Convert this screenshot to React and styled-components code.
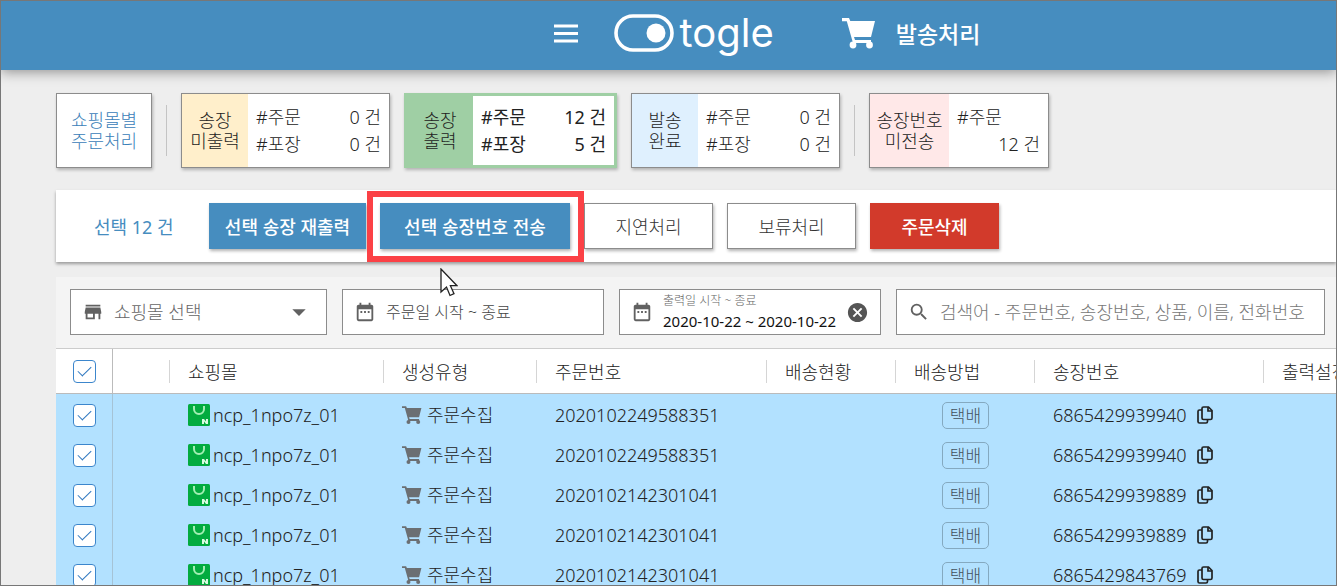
import React, { useState } from "react";
import styled, { createGlobalStyle } from "styled-components";
import {
  MdArrowDropDown,
  MdCancel,
  MdDateRange,
  MdSearch,
  MdStore,
} from "react-icons/md";

const columns = [
  { name: "", width: 57 },
  { name: "쇼핑몰", width: 214 },
  { name: "생성유형", width: 153 },
  { name: "주문번호", width: 230 },
  { name: "배송현황", width: 129 },
  { name: "배송방법", width: 139 },
  { name: "송장번호", width: 229 },
  { name: "출력설정", width: 150 },
];

const orders = [
  { id: 1, mall: "ncp_1npo7z_01", order: "2020102249588351", invoice: "6865429939940" },
  { id: 2, mall: "ncp_1npo7z_01", order: "2020102249588351", invoice: "6865429939940" },
  { id: 3, mall: "ncp_1npo7z_01", order: "2020102142301041", invoice: "6865429939889" },
  { id: 4, mall: "ncp_1npo7z_01", order: "2020102142301041", invoice: "6865429939889" },
  { id: 5, mall: "ncp_1npo7z_01", order: "2020102142301041", invoice: "6865429843769" },
];

function CartIcon({ size }) {
  return (
    <svg width={size} height={size} viewBox="0 0 34 34" fill="currentColor" aria-hidden="true">
      <path d="M0 2h7l1.3 3H33l-4 16H12l1 3h16v3H11L4.800 5.200H0z" />
      <circle cx="11" cy="29" r="3.400" />
      <circle cx="27.500" cy="29" r="3.400" />
    </svg>
  );
}

function MallIcon() {
  return (
    <svg width="22" height="22" viewBox="0 0 22 22" aria-hidden="true">
      <rect width="22" height="22" rx="1.500" fill="#03ab3f" />
      <path d="M6 2v3a5 5 0 0 0 10 0V2" fill="none" stroke="#a4efb4" strokeWidth="2" />
      <path d="M14 20v-5h2l2 2.500V15h2v5h-2l-2-2.500V20z" fill="#d9fbe0" />
    </svg>
  );
}

function CopyIcon() {
  return (
    <svg width="18" height="20" viewBox="0 0 18 20" fill="none" stroke="currentColor" strokeWidth="1.700" aria-hidden="true">
      <path d="M7.500 2h5L16 5.500V13a1.500 1.500 0 0 1-1.500 1.500h-7A1.500 1.500 0 0 1 6 13V3.500A1.500 1.500 0 0 1 7.500 2z" />
      <path d="M12 2v4h4" />
      <path d="M6 5H3.500A1.500 1.500 0 0 0 2 6.500v10A1.500 1.500 0 0 0 3.500 18H10a1.500 1.500 0 0 0 1.500-1.500v-2" />
    </svg>
  );
}

function StatusCard({ title, tone, strong, counts }) {
  return (
    <Card $tone={tone} $strong={strong}>
      <CardLabel $tone={tone}>
        {title[0]}
        <br />
        {title[1]}
      </CardLabel>
      <CardBody>
        {counts.map(([name, value]) => (
          <CountRow key={name}>
            <span>{name}</span>
            <Count>{value}</Count>
          </CountRow>
        ))}
      </CardBody>
    </Card>
  );
}

export default function App() {
  const [checked, setChecked] = useState(orders.map((o) => o.id));
  const all = checked.length === orders.length;
  const toggle = (id) =>
    setChecked(checked.includes(id) ? checked.filter((c) => c !== id) : [...checked, id]);

  return (
    <Page>
      <GlobalStyle />
      <Header>
        <MenuButton aria-label="메뉴">
          <svg width="32" height="32" viewBox="0 0 32 32" aria-hidden="true">
            <path d="M4 9h24M4 16.500h24M4 24h24" stroke="#fff" strokeWidth="3.200" />
          </svg>
        </MenuButton>
        <Logo href="#">
          <svg width="60" height="38" viewBox="0 0 60 38" aria-hidden="true">
            <rect x="2" y="2" width="56" height="34" rx="17" fill="none" stroke="#fff" strokeWidth="3.600" />
            <circle cx="42" cy="19" r="9.500" fill="#fff" />
          </svg>
          <LogoText>togle</LogoText>
        </Logo>
        <PageTitle>
          <CartIcon size={34} />
          발송처리
        </PageTitle>
      </Header>

      <Main>
        <Cards>
          <MallCard>
            쇼핑몰별
            <br />
            주문처리
          </MallCard>
          <Divider />
          <StatusCard
            title={["송장", "미출력"]}
            tone="#ffefcb"
            counts={[["#주문", "0 건"], ["#포장", "0 건"]]}
          />
          <StatusCard
            title={["송장", "출력"]}
            tone="#9fcfa4"
            strong
            counts={[["#주문", "12 건"], ["#포장", "5 건"]]}
          />
          <StatusCard
            title={["발송", "완료"]}
            tone="#dff0fe"
            counts={[["#주문", "0 건"], ["#포장", "0 건"]]}
          />
          <Divider />
          <Card>
            <CardLabel $tone="#ffe8e8" $wide>
              송장번호
              <br />
              미전송
            </CardLabel>
            <CardBody $narrow>
              <CountRow>#주문</CountRow>
              <CountRow>
                <Count>12 건</Count>
              </CountRow>
            </CardBody>
          </Card>
        </Cards>

        <Toolbar>
          <Selected>선택 12 건</Selected>
          <Button $kind="primary" $width={157}>선택 송장 재출력</Button>
          <Highlight>
            <Button $kind="primary" $width={190}>선택 송장번호 전송</Button>
            <Pointer width="18" height="30" viewBox="0 0 18 30" aria-hidden="true">
              <path
                d="M1 1v23l5.500-5 3.500 8.500 4-1.800-3.600-8H17z"
                fill="#fff"
                stroke="#222"
                strokeWidth="1.300"
              />
            </Pointer>
          </Highlight>
          <Button $width={129}>지연처리</Button>
          <Button $width={129}>보류처리</Button>
          <Button $kind="danger" $width={129}>주문삭제</Button>
        </Toolbar>

        <Filters>
          <Field $width={257}>
            <MdStore size={22} />
            <Select aria-label="쇼핑몰 선택" defaultValue="">
              <option value="">쇼핑몰 선택</option>
            </Select>
            <MdArrowDropDown size={32} />
          </Field>
          <Field $width={262}>
            <MdDateRange size={22} />
            <Input $small aria-label="주문일" placeholder="주문일 시작 ~ 종료" />
          </Field>
          <Field $width={262}>
            <MdDateRange size={22} />
            <Stack>
              <FieldLabel htmlFor="printDate">출력일 시작 ~ 종료</FieldLabel>
              <DateInput id="printDate" defaultValue="2020-10-22 ~ 2020-10-22" />
            </Stack>
            <ClearButton aria-label="지우기">
              <MdCancel size={23} />
            </ClearButton>
          </Field>
          <Field>
            <MdSearch size={22} />
            <Input
              aria-label="검색어"
              placeholder="검색어 - 주문번호, 송장번호, 상품, 이름, 전화번호"
            />
          </Field>
        </Filters>

        <Table>
          <colgroup>
            <Col $width={57} />
            {columns.map((c) => (
              <Col key={c.name} $width={c.width} />
            ))}
          </colgroup>
          <thead>
            <tr>
              <CheckHead>
                <Checkbox
                  type="checkbox"
                  aria-label="전체 선택"
                  checked={all}
                  onChange={() => setChecked(all ? [] : orders.map((o) => o.id))}
                />
              </CheckHead>
              {columns.map((c) => (
                <Th key={c.name}>
                  <HeadText>{c.name}</HeadText>
                </Th>
              ))}
            </tr>
          </thead>
          <tbody>
            {orders.map((o) => (
              <Row key={o.id} $on={checked.includes(o.id)}>
                <CheckCell>
                  <Checkbox
                    type="checkbox"
                    aria-label={o.order}
                    checked={checked.includes(o.id)}
                    onChange={() => toggle(o.id)}
                  />
                </CheckCell>
                <Td />
                <Td>
                  <Cell $gap={3}>
                    <MallIcon />
                    {o.mall}
                  </Cell>
                </Td>
                <Td>
                  <Cell $gap={5}>
                    <Gray>
                      <CartIcon size={20} />
                    </Gray>
                    주문수집
                  </Cell>
                </Td>
                <Td>{o.order}</Td>
                <Td />
                <Td $center>
                  <Badge>택배</Badge>
                </Td>
                <Td>
                  <Cell $gap={9}>
                    {o.invoice}
                    <CopyButton aria-label="복사">
                      <CopyIcon />
                    </CopyButton>
                  </Cell>
                </Td>
                <Td />
              </Row>
            ))}
          </tbody>
        </Table>
      </Main>
    </Page>
  );
}

const GlobalStyle = createGlobalStyle`
  * {
    box-sizing: border-box;
  }

  body {
    margin: 0;
    background: #eee;
  }

  body, button, input, select {
    font-family: "Noto Sans", "Noto Sans CJK KR", sans-serif;
    font-size: 18px;
    font-weight: 300;
    color: #222;
  }

  button {
    padding: 0;
    border: 0;
    background: none;
    cursor: pointer;
  }

  svg {
    display: block;
    flex: none;
  }
`;

const Page = styled.div`
  height: 100vh;
  overflow: hidden;
  border: 1px solid #777;
  background: #eee;
`;

const Header = styled.header`
  display: flex;
  align-items: center;
  justify-content: center;
  height: 69px;
  padding: 0 140px 5px 333px;
  background: #468dbf;
  color: #fff;
  box-shadow: 0 2px 12px rgba(0, 0, 0, 0.4);
`;

const MenuButton = styled.button`
  color: #fff;
`;

const Logo = styled.a`
  display: flex;
  align-items: center;
  gap: 6px;
  margin-left: 32px;
  color: #fff;
  text-decoration: none;
`;

const LogoText = styled.span`
  font-family: "Inter", sans-serif;
  font-size: 40px;
  font-weight: 400;
  line-height: 64px;
`;

const PageTitle = styled.h1`
  display: flex;
  align-items: center;
  gap: 20px;
  margin: 0 0 0 68px;
  font-size: 23px;
  font-weight: 500;
`;

const Main = styled.main`
  padding: 23px 0 0 55px;
`;

const Cards = styled.div`
  display: flex;
  gap: 14px;
  align-items: center;
`;

const Card = styled.div`
  display: flex;
  height: 75px;
  border: ${(props) => (props.$strong ? `3px solid ${props.$tone}` : "1px solid #8c8c8c")};
  background: #fff;
  box-shadow: 1px 2px 3px rgba(0, 0, 0, 0.25);
  font-weight: ${(props) => (props.$strong ? 400 : 300)};
`;

const MallCard = styled.button`
  width: 96px;
  height: 75px;
  border: 1px solid #8c8c8c;
  background: #fff;
  box-shadow: 1px 2px 3px rgba(0, 0, 0, 0.25);
  color: #3a80b8;
  line-height: 21px;
`;

const CardLabel = styled.div`
  display: flex;
  align-items: center;
  justify-content: center;
  width: ${(props) => (props.$wide ? 79 : 66)}px;
  background: ${(props) => props.$tone};
  font-weight: 300;
  line-height: 21px;
  text-align: center;
`;

const CardBody = styled.div`
  display: flex;
  flex-direction: column;
  justify-content: center;
  width: ${(props) => (props.$narrow ? 99 : 141)}px;
  padding: 0 8px;
`;

const CountRow = styled.div`
  display: flex;
  line-height: 27px;
`;

const Count = styled.span`
  margin-left: auto;
`;

const Divider = styled.div`
  width: 1px;
  height: 51px;
  background: #c4c4c4;
`;

const Toolbar = styled.div`
  display: flex;
  align-items: center;
  gap: 14px;
  height: 72px;
  margin-top: 22px;
  padding-left: 38px;
  background: #fff;
  box-shadow: 0 2px 3px rgba(0, 0, 0, 0.35);
`;

const Selected = styled.div`
  width: 101px;
  color: #468dbf;
  font-weight: 400;
`;

const buttonColors = {
  primary: { back: "#468dbf", line: "#468dbf", text: "#fff" },
  danger: { back: "#d23a2b", line: "#d23a2b", text: "#fff" },
  plain: { back: "#fff", line: "#8c8c8c", text: "#333" },
};

const Button = styled.button`
  width: ${(props) => props.$width}px;
  height: 46px;
  border: 1px solid ${(props) => buttonColors[props.$kind || "plain"].line};
  background: ${(props) => buttonColors[props.$kind || "plain"].back};
  color: ${(props) => buttonColors[props.$kind || "plain"].text};
  box-shadow: 1px 2px 3px rgba(0, 0, 0, 0.3);
  font-weight: ${(props) => (props.$kind ? 500 : 300)};
`;

const Highlight = styled.div`
  position: relative;

  &::after {
    content: "";
    position: absolute;
    inset: -12px -14px -13px -13px;
    border: 6px solid #fb4146;
    pointer-events: none;
  }
`;

const Pointer = styled.svg`
  position: absolute;
  z-index: 1;
  top: 65px;
  left: 60px;
`;

const Filters = styled.div`
  display: flex;
  gap: 15px;
  margin-top: 15px;
  padding: 12px 11px 13px 14px;
  background: #f4f4f4;
`;

const Field = styled.div`
  display: flex;
  align-items: center;
  flex: ${(props) => (props.$width ? "none" : 1)};
  gap: 10px;
  width: ${(props) => (props.$width ? `${props.$width}px` : "auto")};
  min-width: 0;
  height: 46px;
  padding: 0 11px;
  border: 1px solid #8c8c8c;
  background: #fff;
  color: #616161;
`;

const Select = styled.select`
  flex: 1;
  min-width: 0;
  padding: 0;
  border: 0;
  outline: 0;
  appearance: none;
  background: none;
  color: #666;
`;

const Input = styled.input`
  flex: 1;
  min-width: 0;
  padding: 0;
  border: 0;
  outline: 0;
  background: none;
  font-size: ${(props) => (props.$small ? 16 : 18)}px;

  &::placeholder {
    color: ${(props) => (props.$small ? "#444" : "#777")};
  }
`;

const Stack = styled.div`
  display: flex;
  flex: 1;
  flex-direction: column;
  min-width: 0;
`;

const FieldLabel = styled.label`
  color: #666;
  font-size: 12px;
  line-height: 18px;
`;

const DateInput = styled.input`
  width: 100%;
  height: 23px;
  padding: 0;
  border: 0;
  outline: 0;
  background: none;
  color: #111;
  font-size: 15px;
  font-weight: 400;
`;

const ClearButton = styled.button`
  color: #555;
`;

const Table = styled.table`
  width: 100%;
  min-width: 1358px;
  border-top: 1px solid #ccc;
  border-spacing: 0;
  background: #fff;
  table-layout: fixed;
`;

const Col = styled.col`
  width: ${(props) => props.$width}px;
`;

const Th = styled.th`
  height: 45px;
  padding: 0;
  border-bottom: 1px solid #bbb;
  font-weight: 300;
  text-align: left;

  &:last-child > div {
    border-right: 0;
  }
`;

const CheckHead = styled(Th)`
  border-right: 1px solid #bbb;
`;

const HeadText = styled.div`
  height: 23px;
  padding-left: 18px;
  border-right: 1px solid #d5d5d5;
  line-height: 25px;
`;

const Row = styled.tr`
  background: ${(props) => (props.$on ? "#b2e1ff" : "#fff")};
`;

const Td = styled.td`
  height: 40px;
  padding: 2px 0 0 ${(props) => (props.$center ? 0 : 18)}px;
  line-height: 24px;
  text-align: ${(props) => (props.$center ? "center" : "left")};
`;

const CheckCell = styled(Td)`
  padding: 3px 0 0;
  border-right: 1px solid #a5c3d6;
`;

const Cell = styled.div`
  display: flex;
  align-items: center;
  gap: ${(props) => props.$gap}px;
`;

const Gray = styled.span`
  color: #6b6f73;
`;

const Badge = styled.span`
  display: inline-block;
  width: 47px;
  height: 27px;
  border: 1px solid #84a9c0;
  border-radius: 5px;
  color: #43525c;
  font-size: 17px;
  line-height: 25px;
  vertical-align: middle;
`;

const CopyButton = styled.button`
  color: #222;
`;

const Checkbox = styled.input`
  display: grid;
  place-items: center;
  width: 23px;
  height: 23px;
  margin: 0 auto;
  border: 1px solid #3c86cc;
  border-radius: 4px;
  appearance: none;
  background: #fff;

  &:checked::after {
    content: "";
    width: 12px;
    height: 6px;
    margin-bottom: 4px;
    border-bottom: 1px solid #2f78c0;
    border-left: 1px solid #2f78c0;
    rotate: -45deg;
  }
`;
